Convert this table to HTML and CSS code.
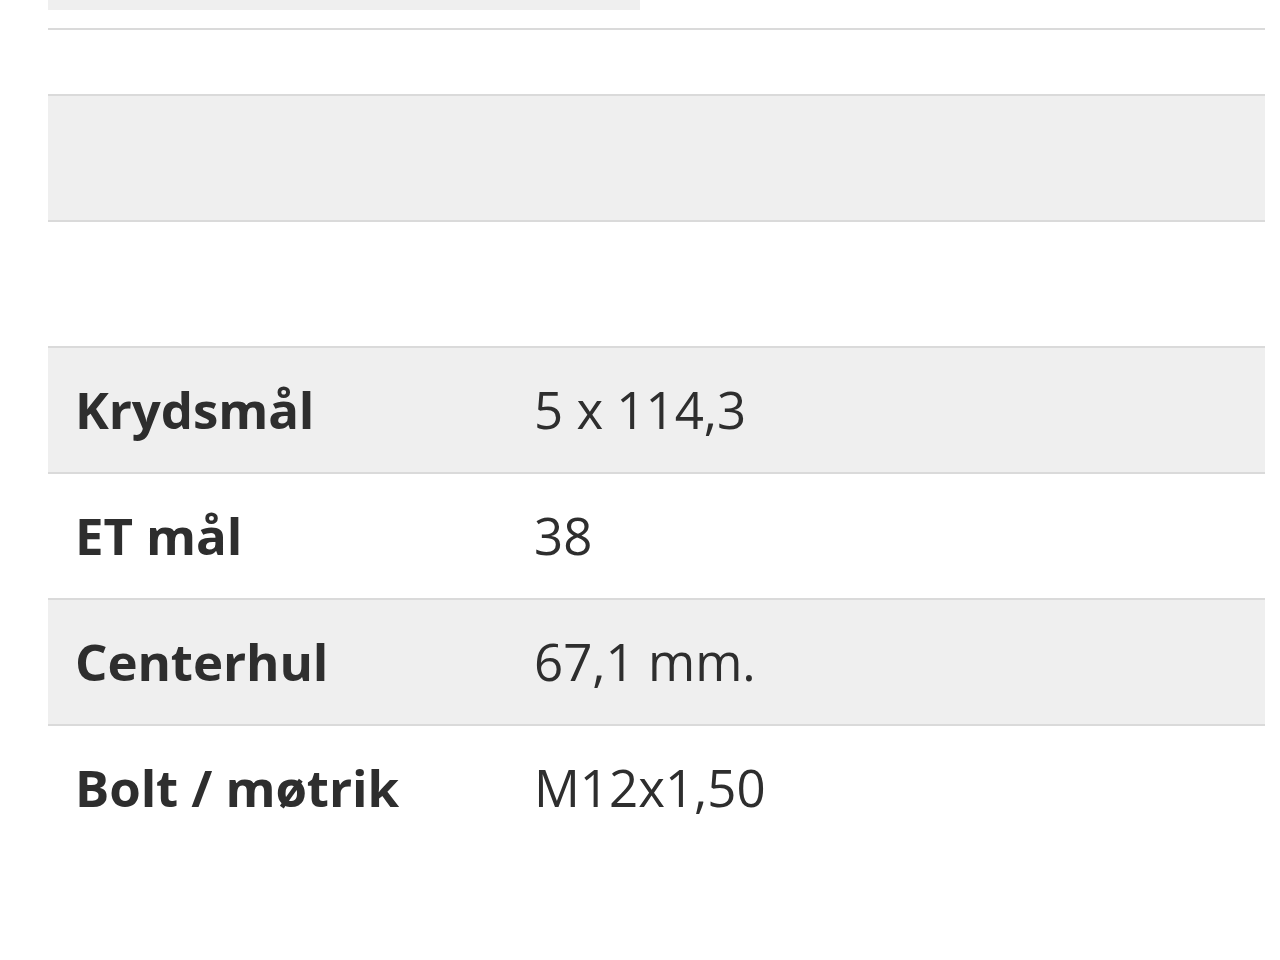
FILE: index.html
```html
<!DOCTYPE html>
<html lang="da">
<head>
<meta charset="utf-8">
<title>Specifikationer</title>
<link rel="stylesheet" href="styles.css">
</head>
<body>
<div class="page">
  <div class="topbar"></div>
  <div class="divider"></div>
  <div class="spec">
    <div class="row shaded"><div class="label"></div><div class="value"></div></div>
    <div class="row"><div class="label"></div><div class="value"></div></div>
    <div class="row shaded"><div class="label">Krydsmål</div><div class="value">5 x 114,3</div></div>
    <div class="row"><div class="label">ET mål</div><div class="value">38</div></div>
    <div class="row shaded"><div class="label">Centerhul</div><div class="value">67,1 mm.</div></div>
    <div class="row"><div class="label">Bolt / møtrik</div><div class="value">M12x1,50</div></div>
  </div>
</div>
</body>
</html>
```

FILE: styles.css
```css
html, body {
  margin: 0;
  padding: 0;
  background: #ffffff;
}

.page {
  padding-left: 48px;
  width: 1217px;
  font-family: "Open Sans", "Noto Sans", "DejaVu Sans", sans-serif;
  color: #2e2e2e;
}

.topbar {
  width: 592px;
  height: 10px;
  background: #efefef;
}

.divider {
  margin-top: 18px;
  height: 2px;
  background: #dadada;
}

.spec {
  margin-top: 64px;
}

.row {
  display: grid;
  grid-template-columns: 486px 1fr;
  align-items: center;
  height: 124px;
  border-top: 2px solid #dadada;
  background: #ffffff;
}

.row.shaded {
  background: #efefef;
}

.label {
  padding-left: 27px;
  padding-bottom: 2px;
  font-size: 51px;
  font-weight: 700;
  line-height: 1;
  letter-spacing: -0.1px;
}

.value {
  padding-bottom: 2px;
  font-size: 51px;
  font-weight: 400;
  line-height: 1;
}
```
